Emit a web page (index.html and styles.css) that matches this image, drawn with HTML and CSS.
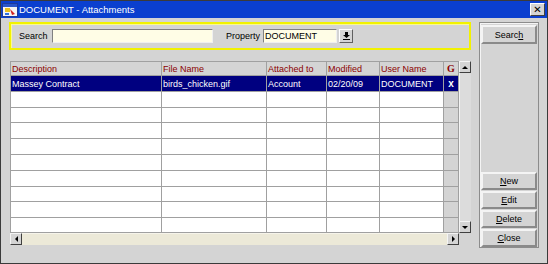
FILE: index.html
```html
<!DOCTYPE html>
<html lang="en">
<head>
  <meta charset="UTF-8" />
  <title>DOCUMENT - Attachments</title>
  <link rel="stylesheet" href="styles.css">
</head>
<body>
  <div class="window">
    <div class="titlebar">
      <svg class="app-icon" width="16" height="14" viewBox="0 0 16 14">
        <rect x="0.5" y="0.5" width="15" height="13" fill="#f4f4f4" stroke="#1c3a9c"/>
        <rect x="1" y="1" width="14" height="3" fill="#2a56c8"/>
        <rect x="3" y="5" width="5" height="4" fill="#e8c020"/>
        <path d="M8 6 L13 11 L10 12 Z" fill="#d02020"/>
        <rect x="3" y="10" width="4" height="2" fill="#3070e0"/>
      </svg>
      <span class="title">DOCUMENT - Attachments</span>
      <button class="close-btn">✕</button>
    </div>

    <div class="content">
      <div class="main">
        <div class="search-box">
          <label class="lbl-search">Search</label>
          <div class="field search-input"></div>
          <label class="lbl-property">Property</label>
          <div class="field property-input">DOCUMENT</div>
          <div class="drop-btn">
            <svg width="7" height="8" viewBox="0 0 7 8">
              <path d="M2 0 H5 V3 H7 L3.5 6 L0 3 H2 Z" fill="#000"/>
              <rect x="0" y="7" width="7" height="1" fill="#000"/>
            </svg>
          </div>
        </div>

        <div class="grid-area">
          <div class="grid-wrap">
            <div id="grid" class="grid">
              <div class="row head">
                <div class="cell">Description</div>
                <div class="cell">File Name</div>
                <div class="cell">Attached to</div>
                <div class="cell">Modified</div>
                <div class="cell">User Name</div>
                <div class="cell g">G</div>
              </div>
            </div>
            <div class="vscroll">
              <div class="sbtn"><span class="tri up"></span></div>
              <div class="vtrack"></div>
              <div class="sbtn"><span class="tri down"></span></div>
            </div>
          </div>
          <div class="hscroll">
            <div class="sbtn"><span class="tri left"></span></div>
            <div class="htrack"></div>
            <div class="sbtn"><span class="tri right"></span></div>
          </div>
        </div>
      </div>

      <div class="side">
        <button class="btn">Searc<u>h</u></button>
        <div class="side-bottom">
          <button class="btn"><u>N</u>ew</button>
          <button class="btn"><u>E</u>dit</button>
          <button class="btn"><u>D</u>elete</button>
          <button class="btn"><u>C</u>lose</button>
        </div>
      </div>
    </div>
  </div>

  <script>
    const attachments = [
      { description: "Massey Contract", file: "birds_chicken.gif", attachedTo: "Account", modified: "02/20/09", user: "DOCUMENT", g: "x" }
    ];
    const totalRows = 10;

    const grid = document.getElementById("grid");
    for (let i = 0; i < totalRows; i++) {
      const a = attachments[i];
      const row = document.createElement("div");
      row.className = "row" + (i === 0 && a ? " selected" : "");
      const values = a ? [a.description, a.file, a.attachedTo, a.modified, a.user, a.g] : ["", "", "", "", "", ""];
      row.innerHTML = values.map((v, j) => `<div class="cell${j === 5 ? " g" : ""}">${v}</div>`).join("");
      grid.appendChild(row);
    }
  </script>
</body>
</html>
```

FILE: styles.css
```css
:root {
  --face: #d4d4d4;
  --line: #a0a0a0;
  --title: #0a3fcf;
  --field: #fffde6;
  --header-text: #8b0000;
  --select: #000080;
}

body {
  margin: 0;
  background: var(--face);
}

.window {
  width: 548px;
  height: 264px;
  box-sizing: border-box;
  border: 1px solid #3a3a3a;
  background: var(--face);
  display: flex;
  flex-direction: column;
  font-family: "Liberation Sans", Arial, sans-serif;
  font-size: 9px;
  color: #000;
}

/* title bar */
.titlebar {
  height: 17px;
  background: var(--title);
  color: #fff;
  display: flex;
  align-items: center;
  padding: 0 2px 0 1px;
  gap: 1px;
}

.app-icon {
  flex: none;
}

.title {
  flex: 1;
  font-size: 9.5px;
}

.close-btn {
  width: 15px;
  height: 13px;
  padding: 0;
  background: var(--face);
  border: 1px solid;
  border-color: #fff #404040 #404040 #fff;
  font-size: 10px;
  font-weight: bold;
  line-height: 10px;
  color: #000;
  font-family: "DejaVu Sans", sans-serif;
}

/* body */
.content {
  flex: 1;
  display: flex;
  gap: 8px;
  padding: 4px 7px 0 8px;
}

.main {
  width: 462px;
  display: flex;
  flex-direction: column;
}

.search-box {
  width: 462px;
  height: 28px;
  box-sizing: border-box;
  border: 2px solid #f2f200;
  box-shadow: inset 1px 1px 0 #fafa90;
  display: flex;
  align-items: center;
  padding-left: 8px;
}

.lbl-search {
  width: 33px;
}

.lbl-property {
  width: 37px;
  margin-left: 13px;
}

.field {
  height: 14px;
  box-sizing: border-box;
  background: var(--field);
  border: 1px solid;
  border-color: #808080 #f0f0f0 #f0f0f0 #808080;
  line-height: 12px;
  padding-left: 1px;
}

.search-input {
  width: 161px;
}

.property-input {
  width: 74px;
}

.drop-btn {
  width: 14px;
  height: 14px;
  box-sizing: border-box;
  margin-left: 2px;
  background: var(--face);
  border: 1px solid;
  border-color: #fff #606060 #606060 #fff;
  display: flex;
  align-items: center;
  justify-content: center;
}

/* grid */
.grid-area {
  margin: 11px 0 0 1px;
  display: flex;
  flex-direction: column;
}

.grid-wrap {
  display: flex;
}

.grid {
  width: 449px;
  box-sizing: border-box;
  display: flex;
  flex-direction: column;
  gap: 1px;
  padding: 1px 0 1px 1px;
  background: var(--line);
}

.row {
  display: grid;
  grid-template-columns: 150px 104px 59px 52px 63px 14px;
  column-gap: 1px;
  height: 15px;
}

.row.head {
  height: 13px;
}

.row:nth-child(4),
.row:nth-child(9),
.row:nth-child(11) {
  height: 14px;
}

.cell {
  background: #fff;
  padding-left: 1px;
  white-space: nowrap;
  overflow: hidden;
  display: flex;
  align-items: center;
}

.cell.g {
  background: var(--face);
  justify-content: center;
  padding: 0;
}

.head .cell {
  background: var(--face);
  color: var(--header-text);
}

.head .cell.g {
  font-family: "Liberation Serif", serif;
  font-weight: bold;
  font-size: 10px;
}

.selected .cell,
.selected .cell.g {
  background: var(--select);
  color: #fff;
}

.selected .cell.g {
  font-weight: bold;
  font-size: 10px;
}

/* scrollbars */
.vscroll {
  width: 12px;
  display: flex;
  flex-direction: column;
}

.vtrack {
  flex: 1;
  background: #dcdcdc;
  border-left: 1px solid #f4f4f4;
}

.hscroll {
  width: 449px;
  height: 12px;
  display: flex;
}

.htrack {
  flex: 1;
  background: #ece9d8;
  border-top: 1px solid #f6f4ea;
}

.sbtn {
  width: 12px;
  height: 12px;
  box-sizing: border-box;
  background: var(--face);
  border: 1px solid;
  border-color: #f4f4f4 #404040 #404040 #f4f4f4;
  display: flex;
  align-items: center;
  justify-content: center;
  flex: none;
}

.tri {
  width: 0;
  height: 0;
  border: 3px solid transparent;
}

.tri.up {
  border-bottom-color: #000;
  border-top-width: 0;
}

.tri.down {
  border-top-color: #000;
  border-bottom-width: 0;
}

.tri.left {
  border-right-color: #000;
  border-left-width: 0;
}

.tri.right {
  border-left-color: #000;
  border-right-width: 0;
}

/* side buttons */
.side {
  width: 60px;
  height: 226px;
  box-sizing: border-box;
  border: 1px solid #8c8c8c;
  box-shadow: inset 1px 1px 0 #f4f4f4;
  padding: 2px 1px 0 1px;
  display: flex;
  flex-direction: column;
  justify-content: space-between;
}

.side-bottom {
  display: flex;
  flex-direction: column;
  gap: 1px;
}

.btn {
  width: 56px;
  height: 19px;
  padding: 0;
  background: var(--face);
  border: 2px solid;
  border-color: #f4f4f4 #8a8a8a #8a8a8a #f4f4f4;
  font-family: "Liberation Sans", Arial, sans-serif;
  font-size: 9px;
  color: #000;
}

.side-bottom .btn {
  height: 18px;
}
```
